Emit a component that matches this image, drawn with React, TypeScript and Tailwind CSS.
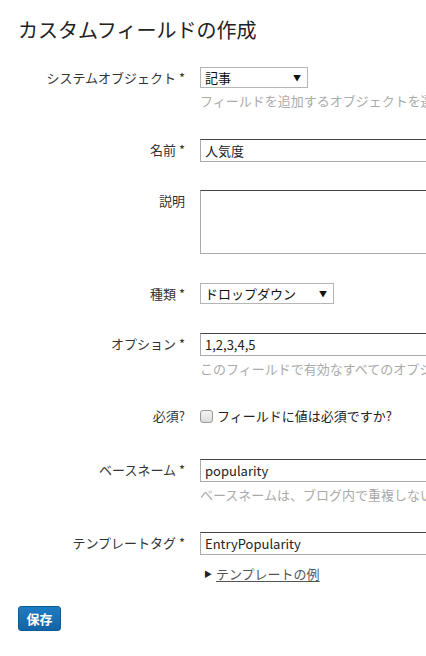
import { ReactNode } from "react";

const FONT = { fontFamily: '"Noto Sans CJK JP", "Noto Sans", sans-serif' };

const Row = ({ label, children, className = "" }: { label: string; children: ReactNode; className?: string }) => (
  <div className={`flex ${className}`}>
    <div className="w-[185px] shrink-0 text-right text-[13px] leading-[22px] text-[#333]">{label}</div>
    <div className="ml-[15px] min-w-0 flex-1">{children}</div>
  </div>
);

const Hint = ({ children }: { children: ReactNode }) => (
  <p className="mt-[4px] whitespace-nowrap text-[13px] leading-[18px] text-[#aaa]">{children}</p>
);

const TextInput = ({ value }: { value: string }) => (
  <div className="h-[23px] w-[400px] border border-[#aaa] border-t-[#444] bg-white pl-[4px] text-[13px] leading-[21px] text-[#222]">
    {value}
  </div>
);

const Select = ({ value, width }: { value: string; width: string }) => (
  <div className={`flex h-[21px] items-center justify-between border border-[#b5b5b5] bg-white pl-[4px] pr-[6px] text-[13px] text-[#111] ${width}`}>
    <span className="leading-[19px]">{value}</span>
    <span className="text-[8px] leading-none">▼</span>
  </div>
);

export default function App() {
  return (
    <div className="h-[656px] w-[426px] overflow-hidden bg-white" style={FONT}>
      <h1 className="pl-[18px] pt-[15px] text-[20px] font-normal leading-[30px] text-[#222]">カスタムフィールドの作成</h1>

      <Row label="システムオブジェクト *" className="mt-[22px]">
        <Select value="記事" width="w-[108px]" />
        <Hint>フィールドを追加するオブジェクトを選択してください。</Hint>
      </Row>

      <Row label="名前 *" className="mt-[29px]">
        <TextInput value="人気度" />
      </Row>

      <Row label="説明" className="mt-[28px]">
        <div className="h-[64px] w-[400px] border border-[#aaa] border-t-[#444] bg-white" />
      </Row>

      <Row label="種類 *" className="mt-[29px]">
        <Select value="ドロップダウン" width="w-[134px]" />
      </Row>

      <Row label="オプション *" className="mt-[28px]">
        <TextInput value="1,2,3,4,5" />
        <Hint>このフィールドで有効なすべてのオプションをカンマで区切って入力してください。</Hint>
      </Row>

      <Row label="必須?" className="mt-[27px]">
        <label className="flex h-[22px] items-center gap-[4px] text-[13px] text-[#222]">
          <span className="h-[13px] w-[13px] rounded-[3px] border border-[#999] bg-gradient-to-b from-[#f4f4f4] to-[#dcdcdc]" />
          <span className="leading-[22px]">フィールドに値は必須ですか?</span>
        </label>
      </Row>

      <Row label="ベースネーム *" className="mt-[32px]">
        <TextInput value="popularity" />
        <Hint>ベースネームは、ブログ内で重複しない値にしてください。</Hint>
      </Row>

      <Row label="テンプレートタグ *" className="mt-[28px]">
        <TextInput value="EntryPopularity" />
        <div className="mt-[9px] flex items-center gap-[4px] pl-[4px] text-[13px] leading-[20px] text-[#555]">
          <span className="text-[8px] text-[#222]">▶</span>
          <a className="underline underline-offset-2">テンプレートの例</a>
        </div>
      </Row>

      <div className="mt-[21px] pl-[18px]">
        <button className="h-[25px] w-[43px] rounded-[3px] border border-[#0d5a94] bg-gradient-to-b from-[#1f7cc2] to-[#1264a5] text-[13px] font-bold leading-none text-white">
          保存
        </button>
      </div>
    </div>
  );
}
